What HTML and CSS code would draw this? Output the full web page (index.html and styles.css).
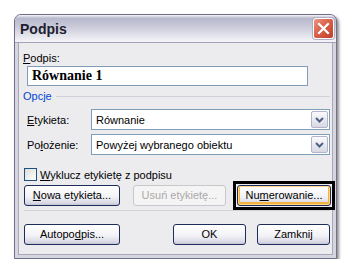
FILE: index.html
```html
<!DOCTYPE html>
<html lang="pl">
<head>
  <meta charset="UTF-8">
  <title>Podpis</title>
  <link rel="stylesheet" href="styles.css">
</head>
<body>
  <div class="window">
    <!-- Title bar -->
    <div class="titlebar">
      <span class="title">Podpis</span>
      <span class="close">
        <svg width="13" height="13" viewBox="0 0 13 13">
          <path d="M2 2 L11 11 M11 2 L2 11" stroke="#fff" stroke-width="2.2" stroke-linecap="square"/>
        </svg>
      </span>
    </div>

    <div class="content">
      <div class="label"><u>P</u>odpis:</div>
      <div class="caption-input">Równanie 1</div>

      <div class="group-title">
        <span>Opcje</span>
        <span class="group-line"></span>
      </div>

      <div class="field-row">
        <span class="field-label"><u>E</u>tykieta:</span>
        <div class="combo">
          <span class="combo-text">Równanie</span>
          <span class="combo-btn">
            <svg width="9" height="6" viewBox="0 0 9 6"><path d="M1 1 L4.5 4.5 L8 1" fill="none" stroke="#4d6185" stroke-width="2"/></svg>
          </span>
        </div>
      </div>
      <div class="field-row">
        <span class="field-label">Po<u>ł</u>ożenie:</span>
        <div class="combo">
          <span class="combo-text">Powyżej wybranego obiektu</span>
          <span class="combo-btn">
            <svg width="9" height="6" viewBox="0 0 9 6"><path d="M1 1 L4.5 4.5 L8 1" fill="none" stroke="#4d6185" stroke-width="2"/></svg>
          </span>
        </div>
      </div>

      <div class="check-row">
        <span class="checkbox"></span>
        <span><u>W</u>yklucz etykietę z podpisu</span>
      </div>

      <div class="button-row">
        <button class="btn btn-new"><u>N</u>owa etykieta...</button>
        <button class="btn btn-del" disabled>Usuń etykietę...</button>
        <span class="focus-ring">
          <button class="btn btn-num focused">Nu<u>m</u>erowanie...</button>
        </span>
      </div>

      <div class="separator"></div>

      <div class="button-row bottom">
        <button class="btn btn-new">Autopo<u>d</u>pis...</button>
        <span class="spacer"></span>
        <button class="btn btn-small">OK</button>
        <button class="btn btn-small">Zamknij</button>
      </div>
    </div>
  </div>
</body>
</html>
```

FILE: styles.css
```css
body {
  margin: 0;
  background: #fff;
  font-family: "Liberation Sans", Arial, sans-serif;
  font-size: 11px;
  color: #000;
}
u {
  text-decoration: underline;
  text-underline-offset: 1px;
}
/* Window frame */
.window {
  margin: 14px 0 0 14px;
  width: 323px;
  height: 245px;
  box-sizing: border-box;
  border: 1px solid #70708a;
  border-radius: 7px 7px 0 0;
  background: #d6d6e0;
  box-shadow: 2px 2px 3px rgba(0, 0, 0, 0.45);
  display: flex;
  flex-direction: column;
}
.titlebar {
  height: 27px;
  flex: none;
  display: flex;
  align-items: flex-start;
  justify-content: space-between;
  background: linear-gradient(#f4f4f8 0, #b9b9cd 12%, #c8c8d8 40%, #e6e6ee 80%, #f4f4f8 100%);
  border-bottom: 1px solid #a2a2b6;
  border-radius: 6px 6px 0 0;
}
.title {
  margin: 6px 0 0 5px;
  font-family: "Liberation Sans", Arial, sans-serif;
  font-size: 14px;
  font-weight: bold;
  color: #202030;
}
.close {
  width: 19px;
  height: 19px;
  margin: 3px 2px 0 0;
  border: 1px solid #fff;
  border-radius: 3px;
  background: linear-gradient(135deg, #ea9682 0%, #d9614a 45%, #c23f2a 100%);
  box-shadow: 0 0 0 1px #b0b0c4;
  display: flex;
  align-items: center;
  justify-content: center;
}
/* Dialog body */
.content {
  flex: 1;
  margin: 0 3px 3px 3px;
  padding: 8px 2px 0 5px;
  background: #ececef;
  border: 1px solid #a8a8ba;
  border-top: none;
}
.label {
  margin-left: -1px;
  height: 14px;
  line-height: 14px;
}
.caption-input {
  margin: 1px 0 0 3px;
  width: 281px;
  height: 20px;
  box-sizing: border-box;
  border: 1px solid #7f9db9;
  background: #fff;
  padding-left: 4px;
  font-family: "Liberation Serif", "Times New Roman", serif;
  font-size: 14px;
  font-weight: bold;
  line-height: 18px;
}
.group-title {
  margin-top: 5px;
  margin-left: -1px;
  height: 11px;
  display: flex;
  align-items: center;
  color: #0046d5;
  line-height: 11px;
}
.group-line {
  flex: 1;
  margin-left: 4px;
  border-top: 1px solid #d0d0d8;
}
.field-row {
  display: flex;
  align-items: center;
  margin-top: 7px;
  height: 21px;
}
.field-row + .field-row {
  margin-top: 4px;
}
.field-label {
  width: 64px;
  padding-left: 3px;
  flex: none;
}
.combo {
  flex: 1;
  height: 21px;
  box-sizing: border-box;
  border: 1px solid #7f9db9;
  background: #fff;
  display: flex;
  align-items: center;
  padding: 1px;
}
.combo-text {
  flex: 1;
  padding-left: 3px;
}
.combo-btn {
  width: 15px;
  height: 15px;
  border: 1px solid #b4b4c8;
  border-radius: 2px;
  background: linear-gradient(#fbfbfd, #d8d8e4);
  display: flex;
  align-items: center;
  justify-content: center;
}
.check-row {
  display: flex;
  align-items: center;
  margin-top: 13px;
  height: 13px;
}
.checkbox {
  width: 11px;
  height: 11px;
  border: 1px solid #1c5180;
  background: linear-gradient(135deg, #dcdcd6, #fff);
  margin-right: 3px;
}
/* Buttons */
.button-row {
  display: flex;
  margin-top: 3px;
  height: 22px;
  align-items: center;
}
.button-row.bottom {
  margin-top: 12px;
}
.btn {
  flex: none;
  height: 21px;
  box-sizing: border-box;
  border: 1px solid #1e2c5c;
  border-radius: 3px;
  background: linear-gradient(#ffffff 0%, #f3f3f7 55%, #dadae6 88%, #c4c4d4 100%);
  font-family: "Liberation Sans", Arial, sans-serif;
  font-size: 11px;
  color: #000;
  padding: 0;
  display: block;
}
.btn-new {
  width: 96px;
}
.btn-del {
  width: 93px;
  margin-left: 13px;
  border-color: #c9c7cc;
  background: #f4f4f4;
  color: #aca8a9;
}
/* black focus rectangle around the default button */
.focus-ring {
  flex: none;
  margin-left: 7px;
  border: 3px solid #000;
  padding: 1px;
  background: #ececef;
}
.btn-num {
  width: 94px;
}
.focused {
  box-shadow: inset 0 0 0 1px #fdd889, inset 0 -1px 0 2px #f5b33e;
}
.separator {
  margin-top: 4px;
  border-top: 1px solid #d0d0d6;
}
.spacer {
  flex: 1;
}
.btn-small {
  width: 73px;
}
.btn-small + .btn-small {
  margin-left: 11px;
}
```
